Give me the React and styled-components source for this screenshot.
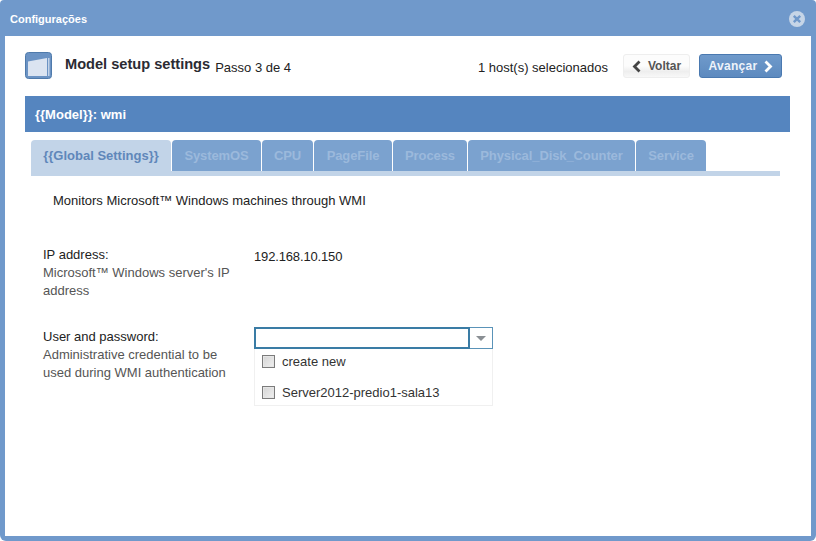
import React from "react";
import styled, { createGlobalStyle } from "styled-components";

const Global = createGlobalStyle`
  html, body { margin: 0; padding: 0; background: #fff; }
  body { font-family: "Liberation Sans", Arial, sans-serif; color: #222; }
  * { box-sizing: border-box; }
`;
const Frame = styled.div`
  width: 816px; height: 541px; padding: 1px 5px 5px 5px; background: #7099cb;
  border-radius: 4px 4px 6px 6px; display: flex; flex-direction: column; overflow: hidden;
`;
const TitleBar = styled.div`
  height: 35px; flex: none; margin: 0 -5px; padding: 0 11px 0 10px; display: flex; align-items: center; justify-content: space-between;
  color: #fff; font-size: 11px; font-weight: 700;
`;
const CloseButton = styled.svg`width: 16px; height: 16px; display: block;`;
const Body = styled.div`
  flex: 1; background: #fff; padding: 15px 20px 0 20px; display: flex; flex-direction: column;
`;
const Header = styled.div`
  display: flex; align-items: center; height: 28px; padding-right: 9px;
`;
const Logo = styled.svg`width: 27px; height: 27px; flex: none; margin-right: 13px;`;
const Title = styled.span`font-size: 14.6px; font-weight: 700; color: #2b2b33; margin-right: 5px; position: relative; top: -1px;`;
const Step = styled.span`font-size: 13px; color: #222; position: relative; top: 2px;`;
const Spacer = styled.div`flex: 1;`;
const Hosts = styled.span`font-size: 13px; color: #222; margin-right: 15px; position: relative; top: 2px;`;
const Button = styled.button`
  height: 24px; margin-top: 2px; font: 700 12px "Liberation Sans", Arial, sans-serif; border-radius: 3px; padding: 0; display: flex; align-items: center; justify-content: center;
  gap: ${p => p.$primary ? 5 : 6}px; width: ${p => p.$primary ? 83 : 67}px; margin-left: ${p => p.$primary ? 9 : 0}px;
  color: ${p => p.$primary ? "#eef3fa" : "#555"};
  border: 1px solid ${p => p.$primary ? "#4a79b0" : "#eeeeee"};
  background: ${p => p.$primary ? "linear-gradient(#6f9acb, #5d8abf)" : "linear-gradient(#fcfcfc 50%, #eeeeee 75%, #f8f8f8)"};
  letter-spacing: ${p => p.$primary ? "0.3px" : "0"};
  svg { display: block; }
`;
const Chevron = styled.svg`width: 10px; height: 13px; flex: none;`;
const Band = styled.div`
  margin-top: 17px; height: 36px; width: 765px; background: #5585bf; color: #fff; font-size: 13px; font-weight: 700;
  display: flex; align-items: center; padding: 0 0 0 10px; flex: none;
`;
const TabArea = styled.div`
  margin: 8px 0 0 6px; width: 749px; border-bottom: 5px solid #c2d4e8; display: flex; gap: 1px; height: 36px; flex: none;
`;
const Tab = styled.div`
  height: ${p => p.$active ? 36 : 31}px; width: ${p => p.$w}px; flex: none; border-radius: 4px 4px 0 0; text-align: center;
  background: ${p => p.$active ? "#c2d4e8" : "#7ba2cf"}; color: ${p => p.$active ? "#5f87ba" : "#9bb9dc"};
  font-size: 13px; font-weight: 700; line-height: 31px; letter-spacing: ${p => p.$active ? "0" : "-0.1px"};
`;
const Description = styled.div`margin: 17px 0 0 28px; font-size: 13px; line-height: 16px; color: #222;`;
const Row = styled.div`
  display: grid; grid-template-columns: 211px 239px; margin: ${p => p.$top}px 0 0 18px;
`;
const Label = styled.div`font-size: 13px; line-height: 18px; color: #222;`;
const Help = styled.div`font-size: 13px; line-height: 17.5px; color: #555; width: 200px;`;
const Value = styled.div`font-size: 13px; line-height: 18px; color: #222; padding-top: 2px; letter-spacing: -0.15px;`;
const Combo = styled.div`
  height: 22px; border: 1px solid #5a93b8; display: flex; margin-top: -1px; position: relative; background: #fff;
`;
const ComboInput = styled.div`flex: 1; border: 2px solid #3a7ca5; margin: -1px 0 -1px -1px;`;
const ComboArrow = styled.div`
  width: 22px; display: flex; align-items: center; justify-content: center;
  &::after { content: ""; border: 5px solid transparent; border-top: 5px solid #8a8f94; border-bottom: 0; }
`;
const Options = styled.div`border: 1px solid #f0f0f0; border-top: 0; display: flex; flex-direction: column; height: 57px;`;
const Option = styled.label`
  display: flex; align-items: center; height: 25px; padding-left: 7px; gap: 7px; font-size: 13px; color: #333;
  margin-bottom: ${p => p.$gap}px;
`;
const Box = styled.span`
  width: 13px; height: 13px; border: 1px solid #7b7b7b; background: linear-gradient(135deg, #d4d4d4, #f0f0f0); flex: none;
  box-shadow: inset 0 0 0 1px #e6e6e6;
`;

const tabs = [
  ["{{Global Settings}}", 140], ["SystemOS", 89], ["CPU", 51], ["PageFile", 78], ["Process", 74],
  ["Physical_Disk_Counter", 167], ["Service", 70],
];

export default function App() {
  return (
    <Frame>
      <Global />
      <TitleBar>
        <span>Configurações</span>
        <CloseButton viewBox="0 0 16 16" aria-label="close">
          <circle cx="8" cy="8" r="8" fill="#c6d5e7" />
          <path d="M4.8 4.8l6.4 6.4M11.2 4.8l-6.4 6.4" stroke="#7099cb" strokeWidth="2.4" />
        </CloseButton>
      </TitleBar>
      <Body>
        <Header>
          <Logo viewBox="0 0 27 27">
            <rect x=".5" y=".5" width="26" height="26" rx="3" fill="#6b93c4" stroke="#4f7aab" />
            <path d="M3 9.5L22 6v18H3z" fill="#dbe4f1" />
            <path d="M23 6h1.5v18H23z" fill="#c3d3e8" />
          </Logo>
          <Title>Model setup settings</Title>
          <Step>Passo 3 de 4</Step>
          <Spacer />
          <Hosts>1 host(s) selecionados</Hosts>
          <Button>
            <Chevron viewBox="0 0 10 13"><path d="M7.5 1.5L2.5 6.5l5 5" fill="none" stroke="#444" strokeWidth="2.8" /></Chevron>
            Voltar
          </Button>
          <Button $primary>
            Avançar
            <Chevron viewBox="0 0 10 13"><path d="M2.5 1.5l5 5-5 5" fill="none" stroke="#fff" strokeWidth="2.8" /></Chevron>
          </Button>
        </Header>
        <Band>{"{{Model}}: wmi"}</Band>
        <TabArea>
          {tabs.map(([t, w], i) => <Tab key={t} $w={w} $active={i === 0}>{t}</Tab>)}
        </TabArea>
        <Description>Monitors Microsoft™ Windows machines through WMI</Description>
        <Row $top={37}>
          <div>
            <Label>IP address:</Label>
            <Help>Microsoft™ Windows server's IP address</Help>
          </div>
          <Value>192.168.10.150</Value>
        </Row>
        <Row $top={29}>
          <div>
            <Label>User and password:</Label>
            <Help>Administrative credential to be used during WMI authentication</Help>
          </div>
          <div>
            <Combo>
              <ComboInput />
              <ComboArrow />
            </Combo>
            <Options>
              <Option $gap={6}><Box />create new</Option>
              <Option $gap={0}><Box />Server2012-predio1-sala13</Option>
            </Options>
          </div>
        </Row>
      </Body>
    </Frame>
  );
}
